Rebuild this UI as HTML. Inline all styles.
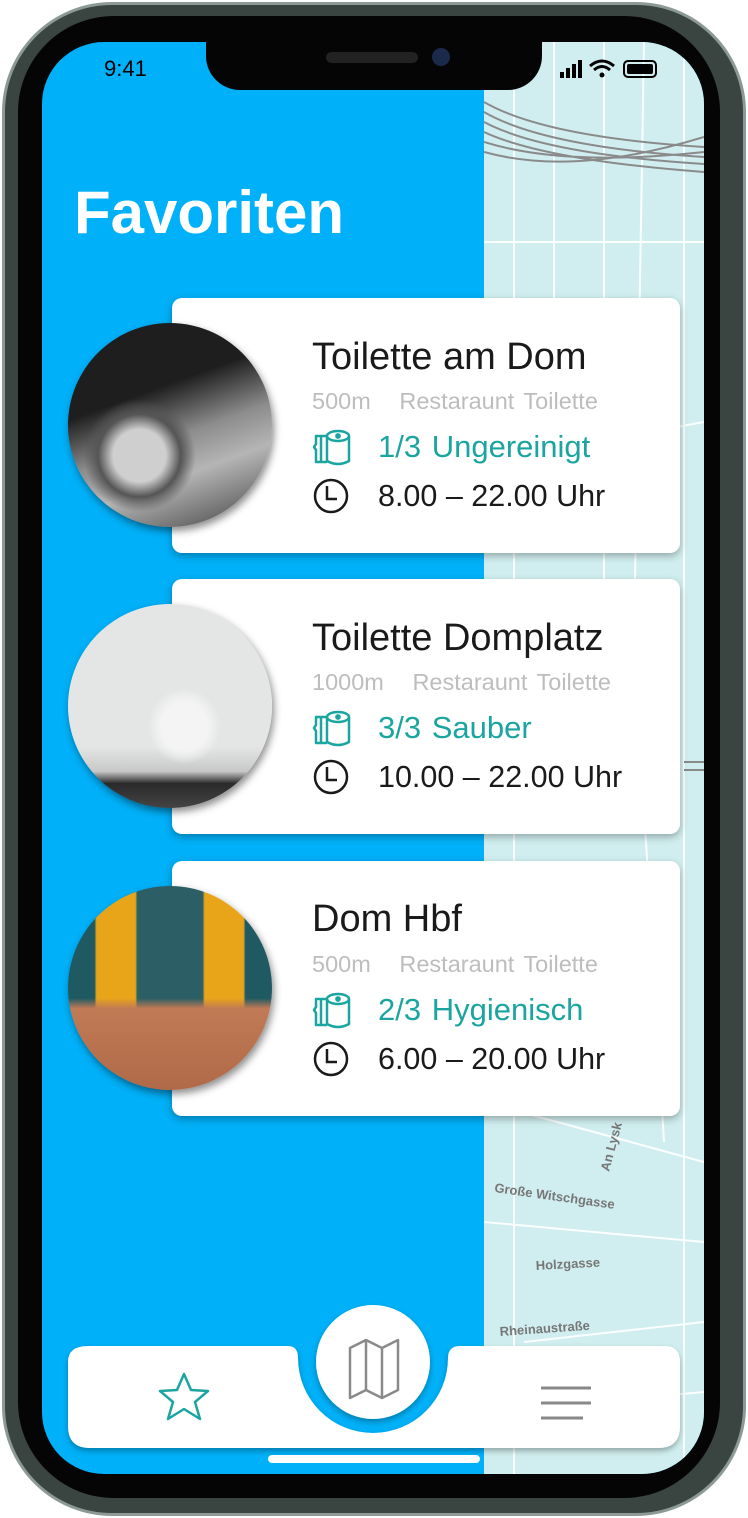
<!DOCTYPE html>
<html><head><meta charset="utf-8"><style>
*{margin:0;padding:0;box-sizing:border-box}
body{width:748px;height:1518px;background:#fff;position:relative;overflow:hidden;font-family:"Liberation Sans",sans-serif}
.frame{position:absolute;left:2px;top:2px;width:744px;height:1514px;border-radius:110px;background:#3a4541;border:3px solid #8d9a94}
.inner{position:absolute;left:18px;top:16px;width:702px;height:1482px;border-radius:96px;background:#050505}
.screen{position:absolute;left:42px;top:42px;width:662px;height:1432px;border-radius:62px;overflow:hidden;background:#00b0f8}
.map{position:absolute;left:442px;top:0;width:220px;height:1432px;background:#d0eeef}
.notch{position:absolute;left:206px;top:30px;width:336px;height:60px;background:#050505;border-radius:0 0 34px 34px}
.card{position:absolute;left:172px;width:508px;height:255px;background:#fff;border-radius:10px;box-shadow:0 3px 8px rgba(0,0,0,.3)}
.circ{position:absolute;left:68px;width:204px;height:204px;border-radius:50%;box-shadow:2px 4px 8px rgba(0,0,0,.45)}
.t{position:absolute;left:312px;font-size:38px;color:#1a1a1a;white-space:nowrap}
.s{position:absolute;left:312px;font-size:23.5px;color:#bdbdbd;white-space:nowrap;word-spacing:3px}
.st{position:absolute;left:378px;font-size:31px;color:#1aa5a0;white-space:nowrap;word-spacing:2px}
.tm{position:absolute;left:378px;font-size:30.5px;color:#1a1a1a;white-space:nowrap}
.ic{position:absolute;left:312px}
</style></head><body>
<div class="frame"></div>
<div class="inner"></div>
<div class="screen">
 <div class="map">
  <svg width="220" height="1432" style="position:absolute;left:0;top:0">
   <g stroke="#fff" stroke-width="2" fill="none" opacity=".9">
    <path d="M30 0 V1432 M70 0 V500 M120 0 V700 M160 0 L150 600 L180 1100 M200 0 V1432 M0 200 H220 M0 420 L220 380 M0 1060 L220 1120 M0 1180 L220 1200 M40 1300 L220 1280 M0 1370 L220 1350"/>
   </g>
   <g stroke="#8a8a8a" stroke-width="2" fill="none">
    <path d="M0 60 Q60 95 220 105 M0 70 Q60 105 220 115 M0 80 Q60 112 220 122 M0 90 Q60 118 220 130 M0 100 Q80 125 220 110 M0 110 Q90 135 220 95"/>
    <path d="M200 720 H220 M200 728 H220"/>
   </g>
   <g fill="#777" font-size="13" font-weight="bold" font-family="Liberation Sans,sans-serif">
    <text x="10" y="1150" transform="rotate(8 10 1150)">Große Witschgasse</text>
    <text x="52" y="1228" transform="rotate(-3 52 1228)">Holzgasse</text>
    <text x="16" y="1294" transform="rotate(-4 16 1294)">Rheinaustraße</text>
    <text x="125" y="1130" transform="rotate(-75 125 1130)">An Lysk</text>
   </g>
  </svg>
 </div>
 <div style="position:absolute;left:32px;top:136px;font-size:60px;font-weight:bold;color:#fff">Favoriten</div>
 <div style="position:absolute;left:62px;top:14px;font-size:22px;color:#000">9:41</div>
 <svg style="position:absolute;left:516px;top:16px" width="110" height="24">
  <rect x="2" y="14" width="4" height="6" fill="#000"/><rect x="8" y="10" width="4" height="10" fill="#000"/><rect x="14" y="6" width="4" height="14" fill="#000"/><rect x="20" y="2" width="4" height="18" fill="#000"/>
  <path d="M32 8 Q44 -2 56 8" stroke="#000" stroke-width="3" fill="none"/><path d="M36 12 Q44 5 52 12" stroke="#000" stroke-width="3" fill="none"/><circle cx="44" cy="17" r="2.5" fill="#000"/>
  <rect x="66" y="3" width="32" height="16" rx="4" fill="none" stroke="#000" stroke-width="2"/><rect x="69" y="6" width="26" height="10" rx="2" fill="#000"/>
 </svg>
</div>
<div class="notch"></div>
<div style="position:absolute;left:326px;top:52px;width:92px;height:11px;border-radius:6px;background:#222"></div>
<div style="position:absolute;left:432px;top:48px;width:18px;height:18px;border-radius:50%;background:#1b2a4a"></div>

<div class="card" style="top:298px"></div>
<div class="circ" style="top:323px;background:radial-gradient(circle at 35% 65%,#cfcfcf 0 14%,#555 22%,transparent 30%),linear-gradient(160deg,#1e1e1e 0 35%,#8c8c8c 55%,#b5b5b5 70%,#404040 100%)"></div>
<div class="t" style="top:336px">Toilette am Dom</div>
<div class="s" style="top:388px">500m &nbsp; Restaraunt Toilette</div>
<div class="st" style="top:429px">1/3 Ungereinigt</div>
<div class="tm" style="top:479px">8.00 – 22.00 Uhr</div>

<div class="card" style="top:579px"></div>
<div class="circ" style="top:604px;background:radial-gradient(ellipse at 57% 60%,#f4f4f4 0 14%,transparent 22%),linear-gradient(180deg,#e4e6e6 0 70%,#c8c8c8 82%,#2a2a2a 88%,#444 100%)"></div>
<div class="t" style="top:617px">Toilette Domplatz</div>
<div class="s" style="top:669px">1000m &nbsp; Restaraunt Toilette</div>
<div class="st" style="top:710px">3/3 Sauber</div>
<div class="tm" style="top:760px">10.00 – 22.00 Uhr</div>

<div class="card" style="top:861px"></div>
<div class="circ" style="top:886px;background:linear-gradient(180deg,transparent 0 55%,#c07a55 60%,#b06a48 100%),linear-gradient(90deg,#1f5a62 0 13%,#e8a51a 14% 33%,#2b5f65 34% 66%,#e8a51a 67% 86%,#1f5a62 87%)"></div>
<div class="t" style="top:898px">Dom Hbf</div>
<div class="s" style="top:951px">500m &nbsp; Restaraunt Toilette</div>
<div class="st" style="top:992px">2/3 Hygienisch</div>
<div class="tm" style="top:1042px">6.00 – 20.00 Uhr</div>

<svg width="0" height="0" style="position:absolute"><defs>
 <g id="roll" fill="none" stroke="#1aa5a0" stroke-width="2.5" stroke-linejoin="round"><ellipse cx="26" cy="8" rx="11" ry="5"/><circle cx="26" cy="8" r="1.6" fill="#1aa5a0"/><path d="M15 8 V33 Q26 39 37 33 V8"/><path d="M15 8 H4 V16 L2 19 L4 22 V34 H15"/><path d="M9 8 V34"/></g>
 <g id="clk" fill="none" stroke="#1a1a1a" stroke-width="2.5"><circle cx="19" cy="19" r="16"/><path d="M15 9 V22 H25"/></g>
</defs></svg>
<svg class="ic" style="top:428px" width="40" height="40"><use href="#roll"/></svg>
<svg class="ic" style="top:477px" width="40" height="40"><use href="#clk"/></svg>
<svg class="ic" style="top:709px" width="40" height="40"><use href="#roll"/></svg>
<svg class="ic" style="top:758px" width="40" height="40"><use href="#clk"/></svg>
<svg class="ic" style="top:991px" width="40" height="40"><use href="#roll"/></svg>
<svg class="ic" style="top:1040px" width="40" height="40"><use href="#clk"/></svg>

<svg style="position:absolute;left:60px;top:1290px" width="630" height="170">
 <defs><filter id="sh"><feDropShadow dx="0" dy="3" stdDeviation="3" flood-opacity=".3"/></filter></defs>
 <path filter="url(#sh)" d="M28 56 H228 Q238 56 238 68 A75 75 0 0 0 388 68 Q388 56 400 56 H604 Q620 56 620 72 V136 Q620 158 598 158 H30 Q8 158 8 136 V72 Q8 56 28 56 Z" fill="#fff"/>
 <ellipse cx="313" cy="72" rx="57" ry="57" fill="#fff" filter="url(#sh)"/>
 <path d="M290 58 L306 50 L322 58 L338 50 V100 L322 108 L306 100 L290 108 Z M306 50 V100 M322 58 V108" fill="none" stroke="#8a8a8a" stroke-width="2.5" stroke-linejoin="round"/>
 <path d="M124 84 L131 100 L148 101 L135 112 L140 129 L124 119 L108 129 L113 112 L100 101 L117 100 Z" fill="none" stroke="#1aa5a0" stroke-width="2.5" stroke-linejoin="round"/>
 <path d="M481 98 H531 M481 113 H531 M481 128 H523" stroke="#888" stroke-width="3"/>
</svg>
<div style="position:absolute;left:268px;top:1455px;width:212px;height:8px;border-radius:4px;background:#fff"></div>
</body></html>
